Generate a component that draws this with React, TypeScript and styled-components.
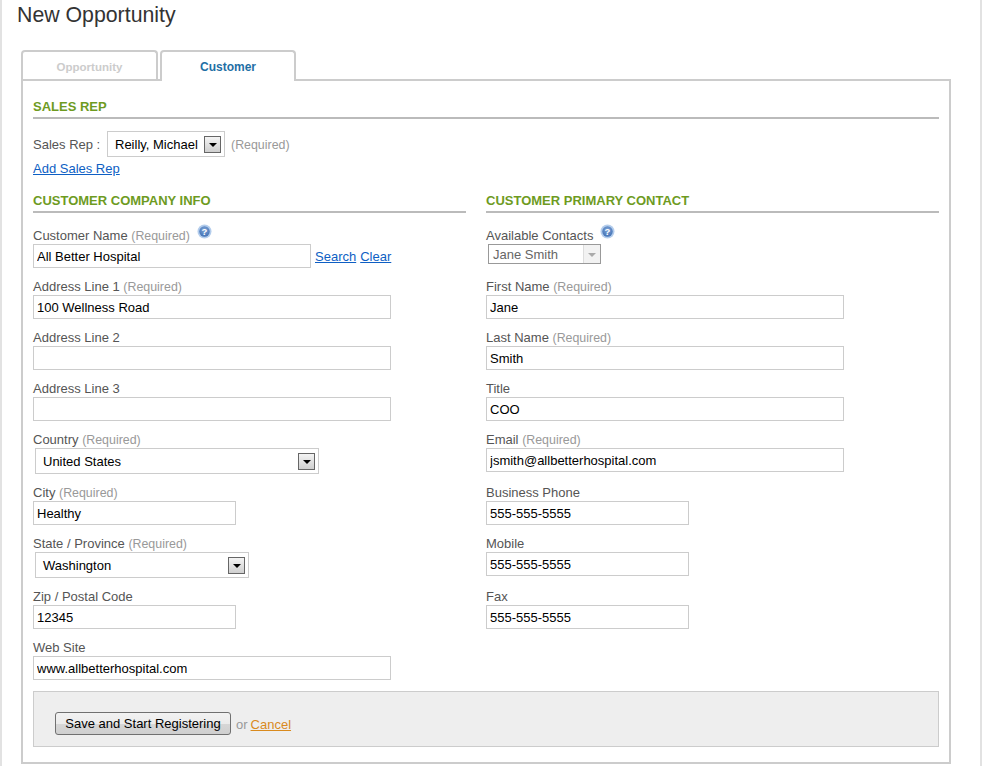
import React from "react";
import styled, { createGlobalStyle } from "styled-components";

const Global = createGlobalStyle`
  html, body { margin: 0; padding: 0; background: #fff; height: 766px; overflow: hidden; }
  body { font-family: "Liberation Sans", Arial, sans-serif; font-size: 13px; color: #555; }
  * { box-sizing: border-box; }
`;

const Page = styled.div`
  width: 982px;
  height: 766px;
  padding: 0 30px 0 20px;
  border-left: 2px solid #e2e2e2;
  border-right: 2px solid #e2e2e2;
  overflow: hidden;
`;

const Title = styled.h1`
  margin: 0 0 0 -5px;
  height: 50px;
  padding-top: 2px;
  font-size: 21.3px;
  line-height: 26px;
  font-weight: 400;
  color: #333;
`;

const TabBar = styled.div`
  display: flex;
  gap: 2px;
  height: 31px;
  margin-left: -1px;
  position: relative;
  z-index: 1;
`;

const Tab = styled.div<{ $active?: boolean }>`
  width: ${(p) => (p.$active ? 136 : 137)}px;
  height: ${(p) => (p.$active ? 31 : 29)}px;
  border: 2px solid #ccc;
  border-bottom: 0;
  border-radius: 4px 4px 0 0;
  background: #fff;
  text-align: center;
  font-size: ${(p) => (p.$active ? 12 : 11.5)}px;
  font-weight: 700;
  line-height: 31px;
  color: ${(p) => (p.$active ? "#1f6fa5" : "#ccc")};
`;

const Panel = styled.div`
  width: 930px;
  height: 685px;
  margin: -2px 0 0 -1px;
  padding: 14px 10px 0;
  border: 2px solid #ccc;
`;

const SectionTitle = styled.h2`
  margin: 0;
  height: 24px;
  padding-top: 1px;
  border-bottom: 2px solid #bbb;
  font-size: 13px;
  line-height: 21px;
  font-weight: 700;
  color: #6e9b1f;
  text-transform: uppercase;
`;

const SalesRow = styled.div`
  display: flex;
  align-items: center;
  height: 26px;
  margin-top: 12px;
`;

const SalesLabel = styled.span`
  width: 74px;
`;

const Required = styled.span`
  color: #999;
  font-size: 12.4px;
  font-weight: 400;
`;

const SalesRequired = styled(Required)`
  margin: 1px 0 0 6px;
`;

const TextLink = styled.a`
  color: #0e5fc4;
  text-decoration: underline;
  font-size: 13px;
`;

const AddLinkRow = styled.div`
  height: 16px;
  margin-top: 4px;
  line-height: 16px;
`;

const Columns = styled.div`
  display: grid;
  grid-template-columns: 433px 453px;
  column-gap: 20px;
  margin-top: 12px;
`;

const Column = styled.div`
  display: flex;
  flex-direction: column;
`;

const Fields = styled.div`
  margin-top: 14px;
  display: flex;
  flex-direction: column;
`;

const Field = styled.div<{ $tall?: boolean }>`
  height: ${(p) => (p.$tall ? 53 : 51)}px;
`;

const Label = styled.div`
  height: 17px;
  line-height: 17px;
  white-space: nowrap;
`;

const HelpIcon = styled.svg`
  display: inline-block;
  width: 15px;
  height: 15px;
  vertical-align: top;
  margin: -3px 0 0 7px;
`;

const InputRow = styled.div`
  display: flex;
  align-items: center;
  gap: 4px;
`;

const Input = styled.input<{ $w: number }>`
  display: block;
  width: ${(p) => p.$w}px;
  height: 24px;
  margin: 0;
  padding: 0 3px;
  border: 1px solid #ccc;
  background: #fff;
  font: 13px "Liberation Sans", Arial, sans-serif;
  color: #000;
  outline: none;
`;

const SelectBox = styled.div<{ $w: number; $inset?: number }>`
  display: flex;
  align-items: center;
  justify-content: space-between;
  width: ${(p) => p.$w}px;
  height: 26px;
  margin-left: ${(p) => p.$inset ?? 0}px;
  padding: 0 3px 0 7px;
  border: 1px solid #ccc;
  background: #fff;
  color: #000;
  white-space: nowrap;
`;

const DropArrow = styled.span`
  display: flex;
  align-items: center;
  justify-content: center;
  width: 17px;
  height: 17px;
  border: 1px solid #666;
  background: linear-gradient(#f4f4f4, #cfcfcf);
  &::after {
    content: "";
    margin-top: 2px;
    border-top: 4px solid #000;
    border-left: 4px solid transparent;
    border-right: 4px solid transparent;
  }
`;

const ContactSelect = styled.div`
  display: flex;
  align-items: center;
  justify-content: space-between;
  width: 113px;
  height: 20px;
  margin: 0 0 0 2px;
  padding-left: 4px;
  border: 1px solid #999;
  background: #fff;
  color: #666;
`;

const ContactArrow = styled.span`
  display: flex;
  align-items: center;
  justify-content: center;
  width: 17px;
  height: 18px;
  border-left: 1px solid #ddd;
  background: #f2f2f2;
  &::after {
    content: "";
    margin-top: 2px;
    border-top: 4px solid #aaa;
    border-left: 4px solid transparent;
    border-right: 4px solid transparent;
  }
`;

const Footer = styled.div`
  display: flex;
  align-items: center;
  height: 56px;
  margin-top: 1px;
  padding: 11px 0 0 21px;
  border: 1px solid #ccc;
  background: #eee;
  color: #999;
`;

const SaveButton = styled.button`
  width: 176px;
  height: 23px;
  margin: 0 5px 2px 0;
  padding: 0;
  border: 1px solid #707070;
  border-radius: 3px;
  background: linear-gradient(#f2f2f2 0%, #ebebeb 50%, #d6d6d6 52%, #cfcfcf 100%);
  font: 13px "Liberation Sans", Arial, sans-serif;
  color: #000;
`;

const CancelLink = styled.a`
  margin-left: 3px;
  color: #d98a1e;
  text-decoration: underline;
`;

const Help = () => (
  <HelpIcon viewBox="0 0 15 15" aria-hidden="true">
    <defs>
      <radialGradient id="helpBall" cx="0.5" cy="0.35" r="0.7">
        <stop offset="0" stopColor="#7fa4d6" />
        <stop offset="1" stopColor="#3f6fb3" />
      </radialGradient>
    </defs>
    <circle cx="7.5" cy="7.5" r="7" fill="#b4cdec" />
    <circle cx="7.5" cy="7.5" r="5.2" fill="url(#helpBall)" />
    <text x="7.5" y="11" textAnchor="middle" fontSize="9.5" fontWeight="700" fontFamily="Liberation Sans" fill="#fff">?</text>
  </HelpIcon>
);

type F = { label: string; req?: boolean; value?: string; w?: number; help?: boolean; tall?: boolean; select?: { w: number; inset: number }; tail?: React.ReactNode; contact?: boolean };

const left: F[] = [
  { label: "Customer Name", req: true, value: "All Better Hospital", w: 278, help: true, tail: <><TextLink>Search</TextLink><TextLink>Clear</TextLink></> },
  { label: "Address Line 1", req: true, value: "100 Wellness Road", w: 358 },
  { label: "Address Line 2", value: "", w: 358 },
  { label: "Address Line 3", value: "", w: 358 },
  { label: "Country", req: true, value: "United States", tall: true, select: { w: 284, inset: 2 } },
  { label: "City", req: true, value: "Healthy", w: 203 },
  { label: "State / Province", req: true, value: "Washington", tall: true, select: { w: 214, inset: 2 } },
  { label: "Zip / Postal Code", value: "12345", w: 203 },
  { label: "Web Site", value: "www.allbetterhospital.com", w: 358 },
];

const right: F[] = [
  { label: "Available Contacts", value: "Jane Smith", help: true, contact: true },
  { label: "First Name", req: true, value: "Jane", w: 358 },
  { label: "Last Name", req: true, value: "Smith", w: 358 },
  { label: "Title", value: "COO", w: 358 },
  { label: "Email", req: true, value: "jsmith@allbetterhospital.com", w: 358, tall: true },
  { label: "Business Phone", value: "555-555-5555", w: 203 },
  { label: "Mobile", value: "555-555-5555", w: 203, tall: true },
  { label: "Fax", value: "555-555-5555", w: 203 },
];

const FieldView = ({ f }: { f: F }) => (
  <Field $tall={f.tall}>
    <Label>
      {f.label}
      {f.req && <> <Required>(Required)</Required></>}
      {f.help && <Help />}
    </Label>
    {f.select ? (
      <SelectBox $w={f.select.w} $inset={f.select.inset}>
        {f.value}
        <DropArrow />
      </SelectBox>
    ) : f.contact ? (
      <ContactSelect>
        {f.value}
        <ContactArrow />
      </ContactSelect>
    ) : (
      <InputRow>
        <Input $w={f.w ?? 358} defaultValue={f.value} />
        {f.tail}
      </InputRow>
    )}
  </Field>
);

export default function App() {
  return (
    <Page>
      <Global />
      <Title>New Opportunity</Title>
      <TabBar>
        <Tab>Opportunity</Tab>
        <Tab $active>Customer</Tab>
      </TabBar>
      <Panel>
        <SectionTitle>Sales Rep</SectionTitle>
        <SalesRow>
          <SalesLabel>Sales Rep :</SalesLabel>
          <SelectBox $w={118}>
            Reilly, Michael
            <DropArrow />
          </SelectBox>
          <SalesRequired>(Required)</SalesRequired>
        </SalesRow>
        <AddLinkRow>
          <TextLink>Add Sales Rep</TextLink>
        </AddLinkRow>
        <Columns>
          <Column>
            <SectionTitle>Customer Company Info</SectionTitle>
            <Fields>
              {left.map((f) => (
                <FieldView key={f.label} f={f} />
              ))}
            </Fields>
          </Column>
          <Column>
            <SectionTitle>Customer Primary Contact</SectionTitle>
            <Fields>
              {right.map((f) => (
                <FieldView key={f.label} f={f} />
              ))}
            </Fields>
          </Column>
        </Columns>
        <Footer>
          <SaveButton>Save and Start Registering</SaveButton>
          or
          <CancelLink>Cancel</CancelLink>
        </Footer>
      </Panel>
    </Page>
  );
}
